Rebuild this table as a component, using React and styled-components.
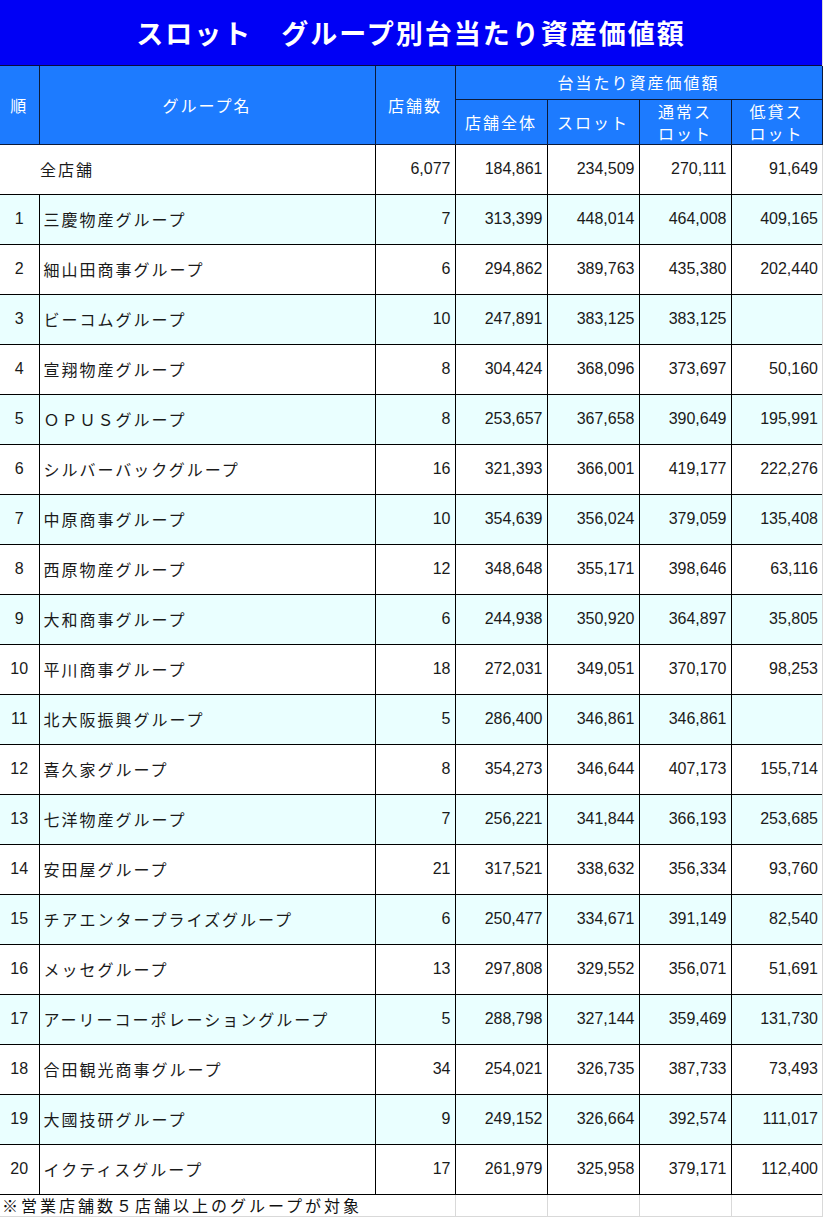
import React from "react";
import styled, { createGlobalStyle } from "styled-components";

const GlobalStyle = createGlobalStyle`
  html, body {
    margin: 0;
    padding: 0;
    background: #ffffff;
  }
  body {
    font-family: "Liberation Sans", "Noto Sans CJK JP", sans-serif;
  }
`;

const rows = [
  [1, "三慶物産グループ", "7", "313,399", "448,014", "464,008", "409,165"],
  [2, "細山田商事グループ", "6", "294,862", "389,763", "435,380", "202,440"],
  [3, "ビーコムグループ", "10", "247,891", "383,125", "383,125", ""],
  [4, "宣翔物産グループ", "8", "304,424", "368,096", "373,697", "50,160"],
  [5, "ＯＰＵＳグループ", "8", "253,657", "367,658", "390,649", "195,991"],
  [6, "シルバーバックグループ", "16", "321,393", "366,001", "419,177", "222,276"],
  [7, "中原商事グループ", "10", "354,639", "356,024", "379,059", "135,408"],
  [8, "西原物産グループ", "12", "348,648", "355,171", "398,646", "63,116"],
  [9, "大和商事グループ", "6", "244,938", "350,920", "364,897", "35,805"],
  [10, "平川商事グループ", "18", "272,031", "349,051", "370,170", "98,253"],
  [11, "北大阪振興グループ", "5", "286,400", "346,861", "346,861", ""],
  [12, "喜久家グループ", "8", "354,273", "346,644", "407,173", "155,714"],
  [13, "七洋物産グループ", "7", "256,221", "341,844", "366,193", "253,685"],
  [14, "安田屋グループ", "21", "317,521", "338,632", "356,334", "93,760"],
  [15, "チアエンタープライズグループ", "6", "250,477", "334,671", "391,149", "82,540"],
  [16, "メッセグループ", "13", "297,808", "329,552", "356,071", "51,691"],
  [17, "アーリーコーポレーショングループ", "5", "288,798", "327,144", "359,469", "131,730"],
  [18, "合田観光商事グループ", "34", "254,021", "326,735", "387,733", "73,493"],
  [19, "大國技研グループ", "9", "249,152", "326,664", "392,574", "111,017"],
  [20, "イクティスグループ", "17", "261,979", "325,958", "379,171", "112,400"],
];

const Page = styled.div`
  width: 823px;
  border-right: 1px solid #d9d9d9;
  box-sizing: border-box;
`;

const Title = styled.div`
  height: 66px;
  background: #0000f5;
  border-bottom: 1px solid #0a0a40;
  box-sizing: border-box;
  display: flex;
  align-items: center;
  justify-content: center;
  color: #ffffff;
  font-family: "Noto Sans CJK JP", sans-serif;
  font-size: 27px;
  font-weight: 700;
  letter-spacing: 2px;
`;

const Table = styled.table`
  width: 822px;
  table-layout: fixed;
  border-collapse: collapse;
  font-size: 16px;
`;

const HeadRow = styled.tr`
  height: ${(p) => p.$h}px;
`;

const HeadCell = styled.th`
  background: #1d7bff;
  color: #ffffff;
  font-family: "Noto Sans CJK JP", sans-serif;
  font-weight: 400;
  font-size: 16px;
  line-height: 22px;
  letter-spacing: 2px;
  text-align: center;
  vertical-align: middle;
  padding: 0;
  border: 1px solid #0b1a3a;
  border-top: none;
  &:first-child {
    border-left: none;
  }
`;

const Row = styled.tr`
  height: ${(p) => p.$h || 50}px;
  background: ${(p) => (p.$alt ? "#eaffff" : "#ffffff")};
`;

const Cell = styled.td`
  border: 1px solid #000000;
  padding: 0 4px;
  color: #1a1a1a;
  vertical-align: middle;
  white-space: nowrap;
  overflow: hidden;
  &:first-child {
    border-left: none;
  }
  &:last-child {
    border-right: none;
  }
`;

const RankCell = styled(Cell)`
  text-align: center;
  padding: 0;
`;

const NameCell = styled(Cell)`
  text-align: left;
  font-family: "Noto Sans CJK JP", sans-serif;
  letter-spacing: 2px;
  padding-left: ${(p) => p.$indent || 4}px;
`;

const NumCell = styled(Cell)`
  text-align: right;
`;

const NoteCell = styled.td`
  padding: 0 2px;
  font-family: "Noto Sans CJK JP", sans-serif;
  font-size: 16px;
  letter-spacing: 3px;
  color: #111111;
  white-space: nowrap;
  border-top: 1px solid #000000;
  border-bottom: 1px solid #d9d9d9;
  vertical-align: top;
  line-height: 20px;
`;

const GridCell = styled.td`
  border: 1px solid #d9d9d9;
  border-top: 1px solid #000000;
  &:last-child {
    border-right: none;
  }
`;

export default function App() {
  return (
    <Page>
      <GlobalStyle />
      <Title>スロット　グループ別台当たり資産価値額</Title>
      <Table>
        <colgroup>
          <col style={{ width: 39 }} />
          <col style={{ width: 336 }} />
          <col style={{ width: 80 }} />
          <col style={{ width: 92 }} />
          <col style={{ width: 92 }} />
          <col style={{ width: 92 }} />
          <col style={{ width: 91 }} />
        </colgroup>
        <thead>
          <HeadRow $h={33}>
            <HeadCell rowSpan={2}>順</HeadCell>
            <HeadCell rowSpan={2}>グループ名</HeadCell>
            <HeadCell rowSpan={2}>店舗数</HeadCell>
            <HeadCell colSpan={4}>台当たり資産価値額</HeadCell>
          </HeadRow>
          <HeadRow $h={45}>
            <HeadCell>店舗全体</HeadCell>
            <HeadCell>スロット</HeadCell>
            <HeadCell>
              通常ス
              <br />
              ロット
            </HeadCell>
            <HeadCell>
              低貸ス
              <br />
              ロット
            </HeadCell>
          </HeadRow>
        </thead>
        <tbody>
          <Row>
            <NameCell colSpan={2} $indent={40}>
              全店舗
            </NameCell>
            <NumCell>6,077</NumCell>
            <NumCell>184,861</NumCell>
            <NumCell>234,509</NumCell>
            <NumCell>270,111</NumCell>
            <NumCell>91,649</NumCell>
          </Row>
          {rows.map(([rank, name, count, all, slot, normal, low]) => (
            <Row key={rank} $alt={rank % 2 === 1}>
              <RankCell>{rank}</RankCell>
              <NameCell>{name}</NameCell>
              <NumCell>{count}</NumCell>
              <NumCell>{all}</NumCell>
              <NumCell>{slot}</NumCell>
              <NumCell>{normal}</NumCell>
              <NumCell>{low}</NumCell>
            </Row>
          ))}
          <Row $h={22}>
            <NoteCell colSpan={3}>※営業店舗数５店舗以上のグループが対象</NoteCell>
            <GridCell />
            <GridCell />
            <GridCell />
            <GridCell />
          </Row>
        </tbody>
      </Table>
    </Page>
  );
}
